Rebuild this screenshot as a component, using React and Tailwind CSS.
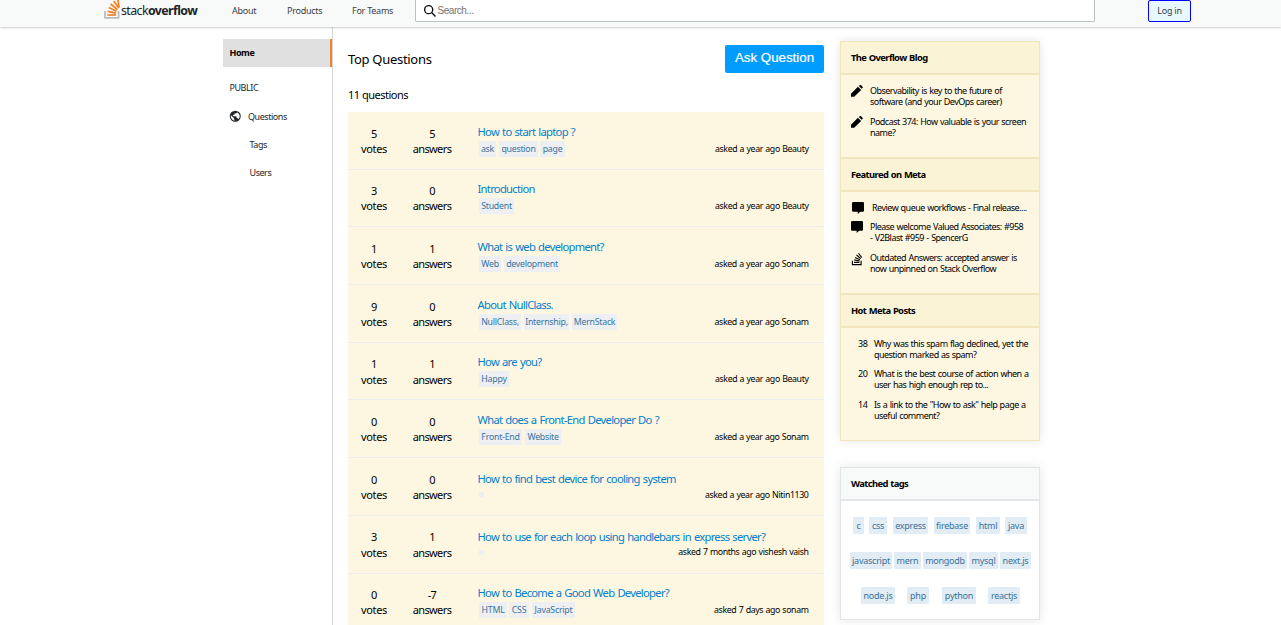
import React from "react";
import { FaStackOverflow } from "react-icons/fa";

const questions = [
  { votes: 5, answers: 5, title: "How to start laptop ?", tags: [["ask", "w-[17px]"], ["question", "w-[39px] ml-[3px]"], ["page", "w-[25px] ml-[2px]"]], asked: "asked a year ago Beauty" },
  { votes: 3, answers: 0, title: "Introduction", tags: [["Student", "w-[35px]"]], asked: "asked a year ago Beauty" },
  { votes: 1, answers: 1, title: "What is web development?", tags: [["Web", "w-[22px]"], ["development", "w-[56px] ml-[3px]"]], asked: "asked a year ago Sonam" },
  { votes: 9, answers: 0, title: "About NullClass.", tags: [["NullClass,", "w-[42px]"], ["Internship,", "w-[45px] ml-[3px]"], ["MernStack", "w-[45px] ml-[3px]"]], asked: "asked a year ago Sonam" },
  { votes: 1, answers: 1, title: "How are you?", tags: [["Happy", "w-[30px]"]], asked: "asked a year ago Beauty" },
  { votes: 0, answers: 0, title: "What does a Front-End Developer Do ?", tags: [["Front-End", "w-[43px]"], ["Website", "w-[36px] ml-[3px]"]], asked: "asked a year ago Sonam" },
  { votes: 0, answers: 0, title: "How to find best device for cooling system", tags: [], asked: "asked a year ago Nitin1130" },
  { votes: 3, answers: 1, title: "How to use for each loop using handlebars in express server?", tags: [], asked: "asked 7 months ago vishesh vaish" },
  { votes: 0, answers: -7, title: "How to Become a Good Web Developer?", tags: [["HTML", "w-[28px]"], ["CSS", "w-[20px] ml-[2px]"], ["JavaScript", "w-[43px] ml-[3px]"]], asked: "asked 7 days ago sonam" },
];

const watched = [
  { row: "pl-[12px]", tags: [["c", "w-[11px]"], ["css", "w-[18px] ml-[5px]"], ["express", "w-[35px] ml-[6px]"], ["firebase", "w-[36px] ml-[6px]"], ["html", "w-[24px] ml-[6px]"], ["java", "w-[22px] ml-[5px]"]] },
  { row: "pl-[9px]", tags: [["javascript", "w-[42px]"], ["mern", "w-[27px] ml-[2px]"], ["mongodb", "w-[44px] ml-[2px]"], ["mysql", "w-[29px] ml-[2px]"], ["next.js", "w-[31px] ml-[2px]"]] },
  { row: "pl-[20px]", tags: [["node.js", "w-[34px]"], ["php", "w-[22px] ml-[12px]"], ["python", "w-[34px] ml-[13px]"], ["reactjs", "w-[32px] ml-[12px]"]] },
];

function LogoMark() {
  return (
    <svg className="h-[22px] w-[16px] shrink-0" viewBox="0 0 16 22" fill="none">
      <path d="M1 14v6.9h13.6V14" stroke="#bcbbbb" strokeWidth="1.7" />
      <g stroke="#f48024" strokeWidth="1.7">
        <path d="M3.4 18h8.6" />
        <path d="M3.7 14.3l8.4 1.8" />
        <path d="M4.7 10.6l7.8 3.6" />
        <path d="M6.7 7l6.6 5.5" />
        <path d="M9.8 4l5 7" />
        <path d="M13.7 2l1.5 8.4" />
      </g>
    </svg>
  );
}

function Globe() {
  return (
    <svg className="h-[12.5px] w-[12.5px] shrink-0" viewBox="0 0 18 18" fill="#232629">
      <path d="M9 1a8 8 0 1 0 0 16A8 8 0 0 0 9 1zM8 15.32a6.4 6.4 0 0 1-5.23-7.75L7 11.68v.8c0 .88.12 1.32 1 1.32v1.52zm5.72-2c-.2-.66-1-1.32-1.72-1.32h-1v-2c0-.44-.56-1-1-1H6V7h1c.44 0 1-.56 1-1V5h2c.88 0 1.4-.72 1.4-1.6v-.33a6.4 6.4 0 0 1 2.32 10.24z" />
    </svg>
  );
}

function Pencil() {
  return (
    <svg className="h-[12px] w-[12px] shrink-0" viewBox="0 0 12 12">
      <path d="M0 8.7 6.9 1.7 10.1 4.9 3.2 11.8H0zM7.8 1.1 8.7.3q.7-.6 1.4 0l1.4 1.4q.6.7 0 1.3l-.8.8z" />
    </svg>
  );
}

function Bubble() {
  return (
    <svg className="h-[12px] w-[12px] shrink-0" viewBox="0 0 12 12">
      <path d="M1.2 0h9.6Q12 0 12 1.2v7.4q0 1.2-1.2 1.2H8.2L5.7 12V9.8H1.2Q0 9.8 0 8.6V1.2Q0 0 1.2 0z" />
    </svg>
  );
}

function Heading({ children, top = "border-t-2", tone = "border-[#f1e5bc] bg-[#fbf3d5]" }) {
  return (
    <h4 className={`border-b-2 pl-[10px] text-[9.4px] leading-[31px] font-bold tracking-[-0.6px] [word-spacing:0.6px] ${top} ${tone}`}>
      {children}
    </h4>
  );
}

function Stat({ value, label, width }) {
  return (
    <div className={`shrink-0 pt-[13.6px] text-center text-[11px] leading-[15.2px] ${width}`}>
      <p>{value}</p>
      <p>{label}</p>
    </div>
  );
}

function Question({ q }) {
  return (
    <article className="flex h-[57.7px] border-b border-[#eceeec] bg-[#fdf7e2]">
      <Stat value={q.votes} label="votes" width="w-[52px] tracking-[-0.35px]" />
      <Stat value={q.answers} label="answers" width="w-[64px] tracking-[-0.6px]" />
      <div className="ml-[13.5px] flex min-w-0 grow flex-col pt-[11.5px] pr-[15.5px]">
        <a className={`text-[11.2px] leading-[16px] tracking-[-0.7px] [word-spacing:0.8px] whitespace-nowrap text-[#037ecb] ${q.tags.length ? "" : "pt-[1.5px]"}`}>{q.title}</a>
        <div className={`flex items-center justify-between ${q.tags.length ? "h-[18px]" : "h-[15px]"}`}>
          <div className="flex pl-[1.5px]">
            {q.tags.length === 0 && <span className="h-[5px] w-[5px] bg-[#edeff2]" />}
            {q.tags.map(([name, cls]) => (
              <span key={name} className={`h-[16px] bg-[#edeff2] text-center text-[8.8px] leading-[16px] tracking-[-0.25px] whitespace-nowrap text-[#39739d] ${cls}`}>{name}</span>
            ))}
          </div>
          <p className="text-[8.8px] leading-[14px] tracking-[-0.4px] [word-spacing:0.5px] whitespace-nowrap">{q.asked}</p>
        </div>
      </div>
    </article>
  );
}

function Item({ icon, lines, className = "" }) {
  return (
    <div className={`flex ${className}`}>
      {icon}
      <p className="text-[9px] leading-[11px] tracking-[-0.53px] [word-spacing:0.6px] whitespace-nowrap">
        {lines.map((l) => (
          <span key={l} className="block">{l}</span>
        ))}
      </p>
    </div>
  );
}

export default function App() {
  return (
    <div className="h-[625px] w-[1281px] overflow-hidden bg-white font-['Noto_Sans',sans-serif] text-black">
      <header className="relative z-10 flex h-[27px] items-start bg-[#f8f9f9] pl-[104px] text-[#525960] shadow-[0_1px_2px_rgba(0,0,0,0.2)]">
        <div className="-mt-[3px] flex w-[112px] items-start text-[12.4px] text-[#222426]">
          <LogoMark />
          <span className="mt-[5px] ml-px leading-[18px] tracking-[-0.6px] whitespace-nowrap">stack<b>overflow</b></span>
        </div>
        <nav className="flex text-[9px] leading-[22px] tracking-[-0.25px] whitespace-nowrap text-[#3b4045]">
          <a className="ml-[16px] w-[55px]">About</a>
          <a className="w-[65px]">Products</a>
          <a className="w-[63px]">For Teams</a>
        </nav>
        <div className="flex h-[22px] w-[680px] items-center rounded-b-[2px] border border-t-0 border-[#babfc4] bg-white pl-[8px]">
          <svg className="h-[12px] w-[12px]" viewBox="0 0 18 18" fill="#0c0d0e">
            <path d="m18 16.5-5.14-5.18h-.35a7 7 0 1 0-1.19 1.19v.35L16.5 18l1.5-1.5zM12 7A5 5 0 1 1 2 7a5 5 0 0 1 10 0z" />
          </svg>
          <span className="ml-[1.5px] font-['Liberation_Sans',sans-serif] text-[10px] tracking-[-0.45px] text-[#757575]">Search...</span>
        </div>
        <a className="ml-[53px] h-[22px] w-[43px] rounded-[2px] border border-[#0000ff] bg-[#e7f8fe] text-center text-[9px] leading-[20px] tracking-[-0.2px] text-[#3b4045]">Log in</a>
      </header>

      <div className="flex h-[598px] pl-[223px]">
        <aside className="w-[110px] shrink-0 border-r border-[#d6d9dc] pt-[12px] text-[9px] tracking-[-0.45px] text-[#232629]">
          <div className="h-[28px] border-r-2 border-[#f48225] bg-[#e0e0e0] pl-[6.5px] leading-[27px] font-bold text-black">Home</div>
          <div className="mt-[7px] h-[28px] pl-[6.5px] leading-[28px]">PUBLIC</div>
          <div className="flex h-[29px] items-center pl-[5.5px]">
            <Globe />
            <span className="mt-px ml-[7px]">Questions</span>
          </div>
          <div className="h-[28px] pl-[26.5px] leading-[28px]">Tags</div>
          <div className="h-[28px] pl-[26.5px] leading-[28px]">Users</div>
        </aside>

        <main className="ml-[15px] w-[476px] shrink-0">
          <div className="flex items-start justify-between pt-[18px]">
            <h1 className="text-[13px] leading-[29px] tracking-[-0.3px]">Top Questions</h1>
            <button className="h-[28px] w-[99px] rounded-[2px] bg-[#009dff] pb-[2px] font-['Liberation_Sans',sans-serif] text-[13.3px] leading-[26px] text-white [-webkit-text-stroke:0.2px_white]">Ask Question</button>
          </div>
          <p className="mt-[10px] h-[28px] text-[11px] leading-[22px] tracking-[-0.5px]">11 questions</p>
          <section>
            {questions.map((q) => (
              <Question key={q.title} q={q} />
            ))}
          </section>
        </main>

        <aside className="ml-[16px] w-[200px] shrink-0 pt-[14px]">
          <section className="h-[400px] border border-[#f1e5bc] bg-[#fdf7e2] shadow-[0_0_10px_rgba(0,0,0,0.1)]">
            <Heading top="">The Overflow Blog</Heading>
            <div className="h-[82px] pt-[10px] pl-[10px]">
              <Item icon={<Pencil />} className="gap-[7px]" lines={["Observability is key to the future of", "software (and your DevOps career)"]} />
              <Item icon={<Pencil />} className="mt-[9px] gap-[7px]" lines={["Podcast 374: How valuable is your screen", "name?"]} />
            </div>
            <Heading>Featured on Meta</Heading>
            <div className="h-[101px] pt-[10px] pl-[10px]">
              <Item icon={<Bubble />} className="h-[11px] gap-[8px] pl-px" lines={["Review queue workflows - Final release...."]} />
              <Item icon={<Bubble />} className="mt-[8px] gap-[7px]" lines={["Please welcome Valued Associates: #958", "- V2Blast #959 - SpencerG"]} />
              <Item icon={<FaStackOverflow className="h-[14px] w-[12px] shrink-0" />} className="mt-[9px] gap-[7px]" lines={["Outdated Answers: accepted answer is", "now unpinned on Stack Overflow"]} />
            </div>
            <Heading>Hot Meta Posts</Heading>
            <div className="pt-[10px] pl-[17px] text-[9px] leading-[11px] tracking-[-0.3px]">
              <Item icon={<span className="w-[16px]">38</span>} lines={["Why was this spam flag declined, yet the", "question marked as spam?"]} />
              <Item icon={<span className="w-[16px]">20</span>} className="mt-[8px]" lines={["What is the best course of action when a", "user has high enough rep to..."]} />
              <Item icon={<span className="w-[16px]">14</span>} className="mt-[9px]" lines={['Is a link to the "How to ask" help page a', "useful comment?"]} />
            </div>
          </section>

          <section className="mt-[26px] h-[153px] border border-[#e3e6e8] bg-white shadow-[0_0_10px_rgba(0,0,0,0.1)]">
            <Heading top="" tone="border-[#e3e6e8] bg-[#f8f9f9]">Watched tags</Heading>
            <div className="flex flex-col gap-[18px] pt-[16px]">
              {watched.map((r) => (
                <div key={r.row} className={`flex ${r.row}`}>
                  {r.tags.map(([name, cls]) => (
                    <span key={name} className={`h-[17px] rounded-[1px] bg-[#e1ecf4] text-center text-[9px] leading-[17px] tracking-[-0.25px] whitespace-nowrap text-[#39739d] ${cls}`}>{name}</span>
                  ))}
                </div>
              ))}
            </div>
          </section>
        </aside>
      </div>
    </div>
  );
}
